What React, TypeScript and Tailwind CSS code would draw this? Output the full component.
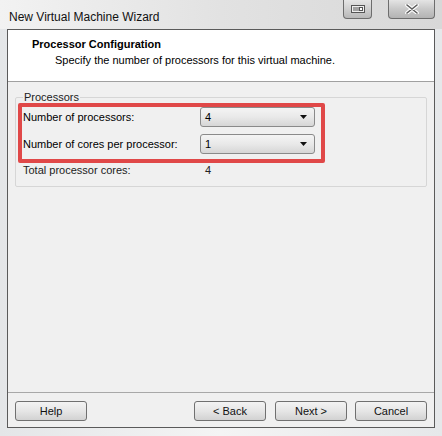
import React from "react";

const font = { fontFamily: "'Liberation Sans', Arial, sans-serif" };

const Combo: React.FC<{ value: string }> = ({ value }) => (
  <div className="flex h-[20px] w-[115px] items-center justify-between rounded-[3px] border border-[#8a8a8a] bg-gradient-to-b from-[#f4f4f4] via-[#e9e9e9] to-[#d6d6d6] pl-[4px] pr-[7px] text-[11px] text-black">
    <span>{value}</span>
    <svg width="7" height="4" viewBox="0 0 7 4">
      <path d="M0 0h7L3.5 4z" fill="#111" />
    </svg>
  </div>
);

const Btn: React.FC<{ label: string; className?: string }> = ({ label, className }) => (
  <button
    className={
      "flex h-[20px] w-[72px] items-center justify-center rounded-[3px] border border-[#707070] bg-gradient-to-b from-[#f3f3f3] via-[#e6e6e6] to-[#d2d2d2] text-[11px] text-[#111] " +
      (className || "")
    }
  >
    {label}
  </button>
);

export default function App() {
  return (
    <div
      className="flex h-[436px] w-[442px] flex-col overflow-hidden bg-gradient-to-r from-[#e4e6e8] via-[#f4f4f4] to-[#e6e8ea]"
      style={font}
    >
      {/* title bar */}
      <div className="flex h-[29px] shrink-0 items-start justify-between bg-gradient-to-r from-[#f2f2f2] via-[#e2e2e2] to-[#d8d8d8]">
        <span className="pl-[9px] pt-[8px] text-[12px] text-[#111]">New Virtual Machine Wizard</span>
        <div className="flex pr-[7px]">
          <div className="flex h-[19px] w-[29px] items-center justify-center rounded-b-[4px] border border-t-0 border-[#6d6d6d] bg-gradient-to-b from-[#e6e6e6] via-[#cfcfcf] to-[#b8b8b8]">
            <svg width="14" height="8" viewBox="0 0 14 8">
              <rect x="0.5" y="0.5" width="13" height="7" fill="#eee" stroke="#555" />
              <path d="M3 2v4M5 2v4M7 2v4" stroke="#555" />
              <rect x="8.5" y="2.5" width="3" height="3" fill="#fff" stroke="#555" />
            </svg>
          </div>
          <div className="ml-[16px] flex h-[19px] w-[47px] items-center justify-center rounded-b-[4px] border border-t-0 border-[#6d6d6d] bg-gradient-to-b from-[#e4e4e4] via-[#c8c8c8] to-[#b3b3b3]">
            <svg width="14" height="10" viewBox="0 0 14 10">
              <path d="M2 1l10 8M12 1L2 9" stroke="#fff" strokeWidth="3.6" strokeLinecap="round" />
              <path d="M2 1l10 8M12 1L2 9" stroke="#5c5c5c" strokeWidth="1.6" strokeLinecap="round" />
            </svg>
          </div>
        </div>
      </div>

      {/* window body */}
      <div className="mx-[7px] mb-[8px] flex flex-1 flex-col border border-[#5a5a5a] bg-[#f0f0f0]">
        <div className="flex h-[52px] shrink-0 flex-col border-b border-[#a0a0a0] bg-white pl-[24px] pt-[7px]">
          <span className="text-[11px] font-bold leading-[14px] text-black">Processor Configuration</span>
          <span className="pl-[23px] pt-[2px] text-[11px] leading-[14px] text-black">
            Specify the number of processors for this virtual machine.
          </span>
        </div>

        <div className="flex-1 px-[7px] pt-[9px]">
          <fieldset className="h-[96px] rounded-[2px] border border-[#d6d6d6] px-[2px] pb-0">
            <legend className="ml-[5px] px-[1px] text-[11px] leading-[13px] text-[#222]">Processors</legend>
            <div className="mt-[-1px] flex w-[307px] flex-col gap-[7px] rounded-[2px] border-4 border-[#e04848] pb-[5px] pl-[1px]">
              <div className="flex h-[20px] items-center">
                <span className="w-[177px] text-[11px] text-black">Number of processors:</span>
                <Combo value="4" />
              </div>
              <div className="flex h-[20px] items-center">
                <span className="w-[177px] text-[11px] text-black">Number of cores per processor:</span>
                <Combo value="1" />
              </div>
            </div>
            <div className="flex h-[14px] items-center pl-[5px] text-[11px] text-[#222]">
              <span className="w-[182px]">Total processor cores:</span>
              <span>4</span>
            </div>
          </fieldset>
        </div>

        <div className="flex h-[35px] shrink-0 items-start border-t border-[#a8a8a8] px-[7px] pt-[8px]">
          <Btn label="Help" />
          <div className="flex-1" />
          <Btn label="< Back" />
          <Btn label="Next >" className="ml-[9px]" />
          <Btn label="Cancel" className="ml-[8px]" />
        </div>
      </div>
    </div>
  );
}
